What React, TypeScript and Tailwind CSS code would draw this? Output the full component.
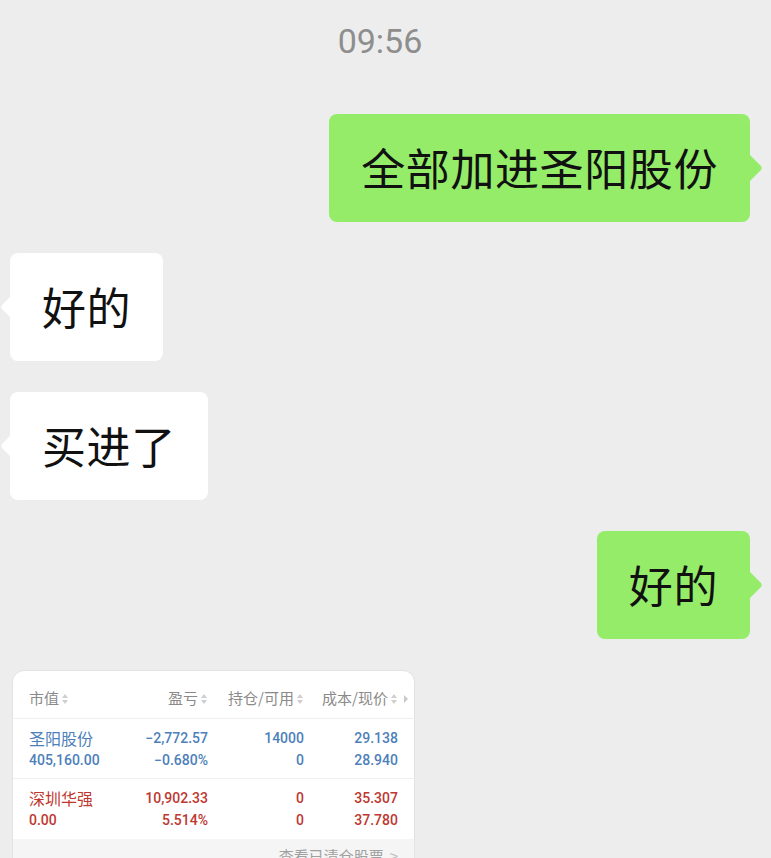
import React from 'react';

const cjk = { fontFamily: '"Noto Sans CJK SC", "Noto Sans", sans-serif' };
const num = { fontFamily: 'Roboto, "Noto Sans CJK SC", sans-serif' };

function Tail({ side, color }: { side: 'left' | 'right'; color: string }) {
  return (
    <svg
      width="14"
      height="28"
      viewBox="0 0 14 28"
      className={side === 'right' ? 'absolute -right-[13px] top-1/2 -translate-y-1/2' : 'absolute -left-[10px] top-1/2 -translate-y-1/2'}
    >
      {side === 'right' ? (
        <path d="M0 0 L12 12 Q13.5 14 12 16 L0 28 Z" fill={color} />
      ) : (
        <path d="M14 0 L2 12 Q0.5 14 2 16 L14 28 Z" fill={color} />
      )}
    </svg>
  );
}

function Bubble({ text, mine }: { text: string; mine?: boolean }) {
  const color = mine ? '#95ec69' : '#ffffff';
  return (
    <div className={mine ? 'flex justify-end pr-[21px]' : 'flex justify-start pl-[10px]'}>
      <div
        className={`relative rounded-[8px] px-[32px] pt-[23px] pb-[25px] text-[44px] leading-[60px] tracking-[0.6px] text-[#111] ${mine ? 'bg-[#95ec69]' : 'bg-white'}`}
        style={cjk}
      >
        {text}
        <Tail side={mine ? 'right' : 'left'} color={color} />
      </div>
    </div>
  );
}

function Sort() {
  return (
    <svg width="8" height="12" viewBox="0 0 8 12" className="ml-[2px] inline-block">
      <path d="M4 1 L7 5 L1 5 Z" fill="#cfcfcf" />
      <path d="M4 11 L7 7 L1 7 Z" fill="#cfcfcf" />
    </svg>
  );
}

const rows = [
  { name: '圣阳股份', mv: '405,160.00', pl: '−2,772.57', pct: '−0.680%', hold: '14000', avail: '0', cost: '29.138', price: '28.940', color: 'text-[#4d7fba]' },
  { name: '深圳华强', mv: '0.00', pl: '10,902.33', pct: '5.514%', hold: '0', avail: '0', cost: '35.307', price: '37.780', color: 'text-[#be3830]' },
];

function StockCard() {
  return (
    <div className="ml-[12px] w-[403px] overflow-hidden rounded-[12px] border border-[#e2e2e2] bg-white">
      <div className="mx-[1px] mt-[8px] grid h-[40px] grid-cols-[100px_79px_96px_94px] items-center border-b border-[#efefef] pl-[15px] pr-[16px] text-[15px] text-[#8a8a8a]" style={cjk}>
        <div className="flex items-center">市值<Sort /></div>
        <div className="flex items-center justify-end">盈亏<Sort /></div>
        <div className="flex items-center justify-end">持仓/可用<Sort /></div>
        <div className="relative flex items-center justify-end">
          成本/现价<Sort />
          <svg width="6" height="8" viewBox="0 0 6 8" className="absolute -right-[11px] top-1/2 -translate-y-1/2">
            <path d="M1 0 L5 4 L1 8 Z" fill="#c8c8c8" />
          </svg>
        </div>
      </div>
      {rows.map((r, i) => (
        <div
          key={r.name}
          className={`grid h-[60px] grid-cols-[100px_79px_96px_94px] content-center gap-y-[2px] pl-[16px] pr-[16px] text-[14px] font-medium leading-[20px] ${r.color} ${i === 0 ? 'border-b border-[#efefef]' : ''}`}
          style={num}
        >
          <div className="text-[16px] font-normal" style={cjk}>{r.name}</div>
          <div className="text-right">{r.pl}</div>
          <div className="text-right">{r.hold}</div>
          <div className="text-right">{r.cost}</div>
          <div>{r.mv}</div>
          <div className="text-right">{r.pct}</div>
          <div className="text-right">{r.avail}</div>
          <div className="text-right">{r.price}</div>
        </div>
      ))}
      <div className="flex h-[40px] items-start justify-end bg-[#f5f5f5] pr-[16px] pt-[6px] text-[15px] leading-[22px] text-[#a0a0a0]" style={cjk}>
        查看已清仓股票
        <span className="ml-[6px] text-[#c0c0c0]">&gt;</span>
      </div>
    </div>
  );
}

export default function App() {
  return (
    <div className="flex h-[858px] w-[771px] flex-col overflow-hidden bg-[#ededed]">
      <div className="pt-[21px] pr-[11px] text-center text-[34px] leading-[40px] text-[#8e8e8e]" style={{ fontFamily: 'Roboto, sans-serif' }}>
        09:56
      </div>
      <div className="mt-[53px] flex flex-col gap-[31px]">
        <Bubble text="全部加进圣阳股份" mine />
        <Bubble text="好的" />
        <Bubble text="买进了" />
        <Bubble text="好的" mine />
        <StockCard />
      </div>
    </div>
  );
}
